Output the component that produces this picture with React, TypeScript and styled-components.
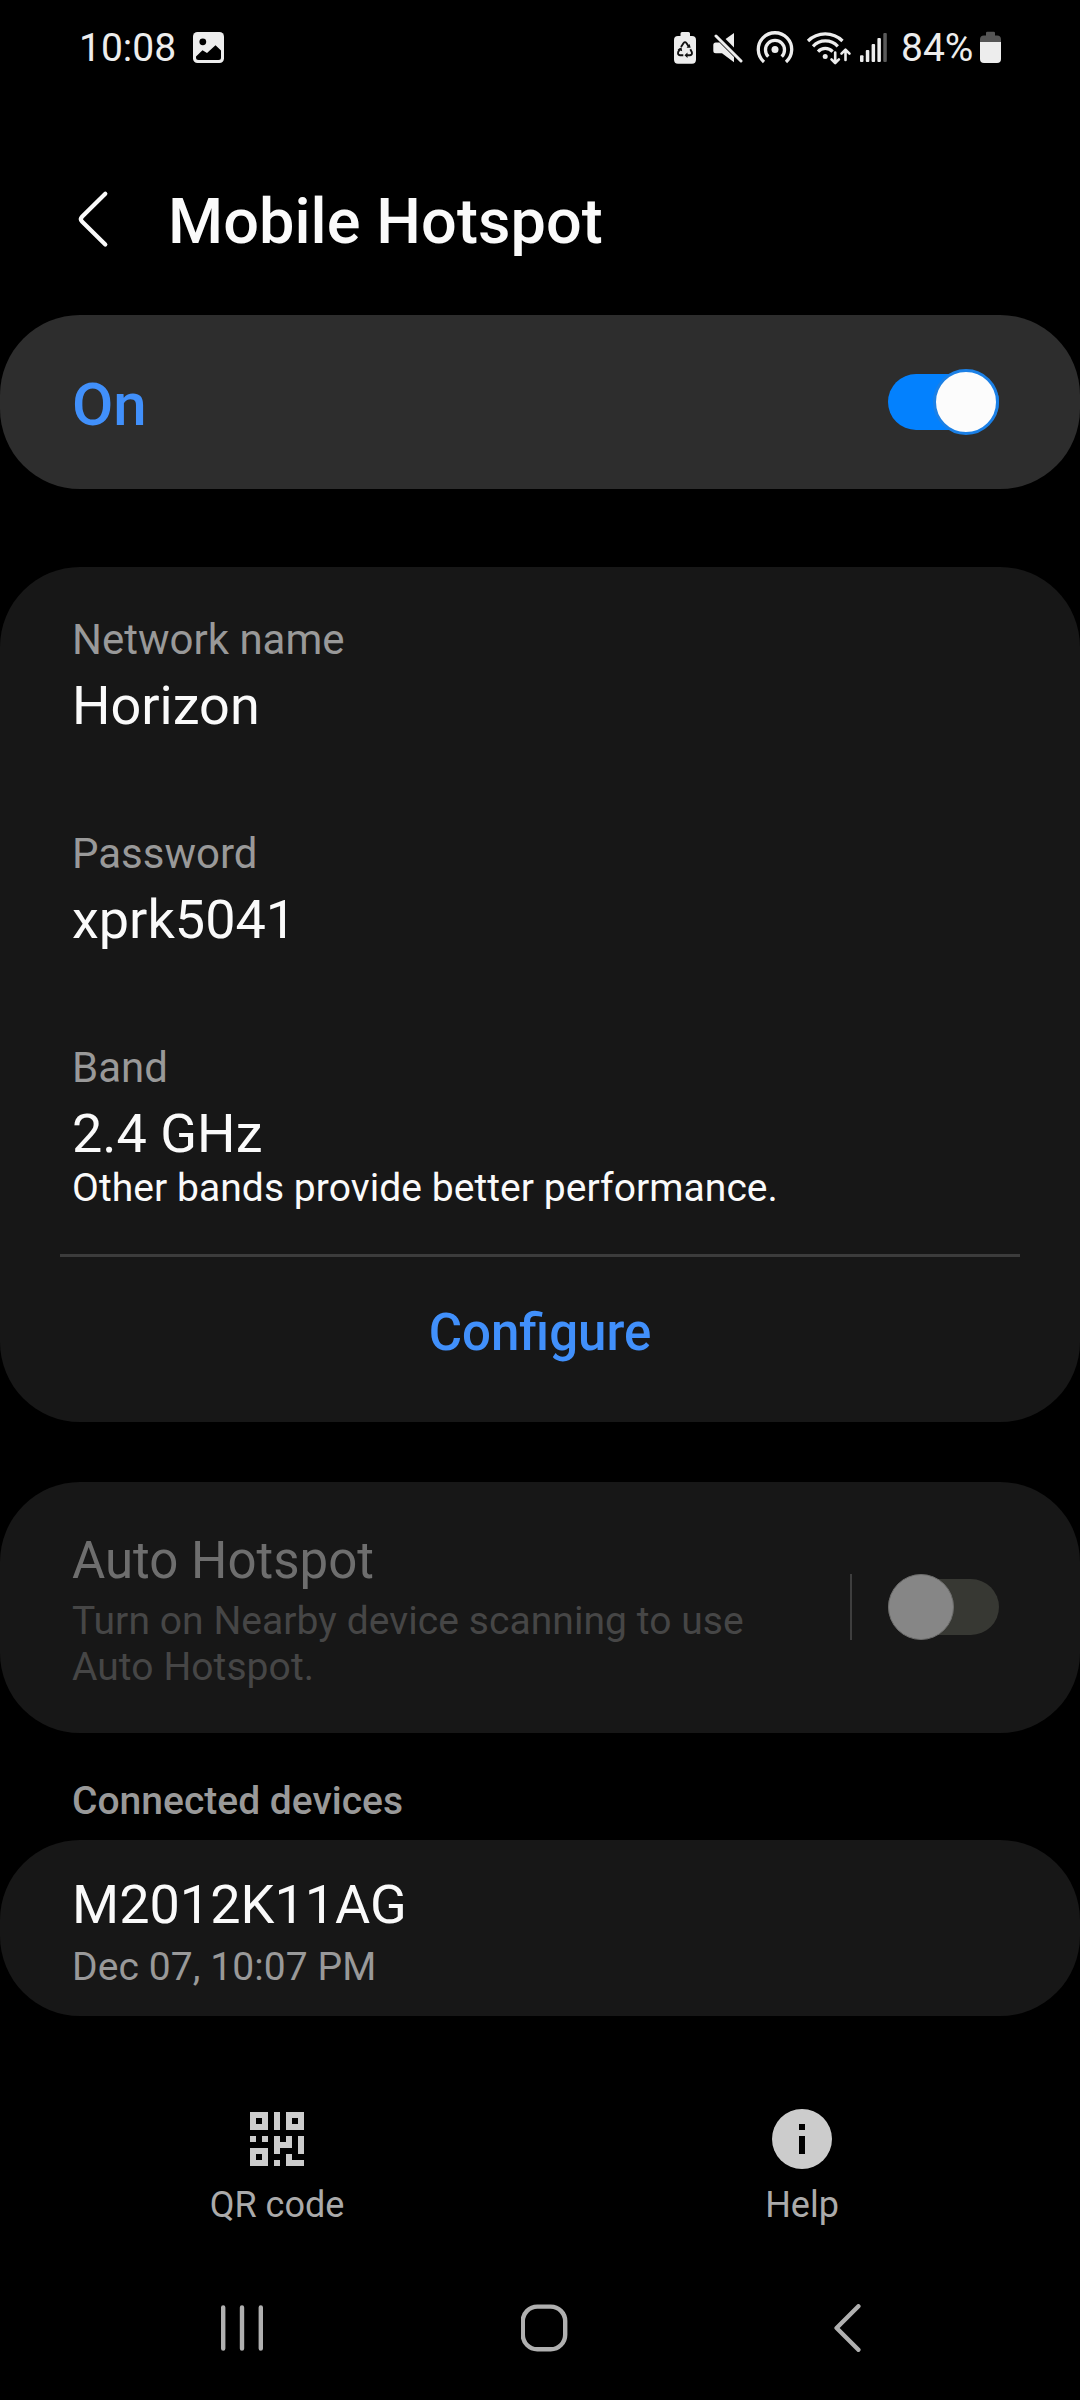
import React from "react";
import styled, { createGlobalStyle } from "styled-components";

const GlobalStyle = createGlobalStyle`
  html, body { margin: 0; padding: 0; background: #000; }
  * { box-sizing: border-box; }
`;

const Screen = styled.div`
  display: flex;
  flex-direction: column;
  width: 1080px;
  height: 2400px;
  overflow: hidden;
  background: #000;
  color: #fafafa;
  font-family: Roboto, "Liberation Sans", sans-serif;
`;

const StatusBar = styled.div`
  display: flex;
  align-items: center;
  height: 96px;
  flex: none;
  padding: 0 79px;
  font-size: 39px;
  line-height: 46px;
  color: #ededed;
`;

const Clock = styled.span`
  width: 114px;
`;

const StatusIcons = styled.div`
  display: flex;
  align-items: center;
  margin-left: auto;
`;

const StatusIcon = styled.svg<{ $before?: number }>`
  display: block;
  height: 40px;
  flex: none;
  margin-left: ${(p) => p.$before ?? 0}px;
`;

const Percent = styled.span`
  width: 79px;
  margin-left: 13px;
`;

const Header = styled.header`
  display: flex;
  align-items: center;
  height: 219px;
  flex: none;
  padding: 27px 72px 0 76px;
`;

const BackIcon = styled.svg`
  display: block;
  width: 36px;
  height: 60px;
`;

const Title = styled.h1`
  margin: 6px 0 0 56px;
  font-size: 63px;
  line-height: 74px;
  font-weight: 500;
  letter-spacing: 0.08px;
`;

const Card = styled.section<{ $top: number; $active?: boolean }>`
  flex: none;
  margin-top: ${(p) => p.$top}px;
  border-radius: 80px;
  background: ${(p) => (p.$active ? "#2d2d2d" : "#171717")};
`;

const MasterRow = styled.div`
  display: flex;
  align-items: center;
  justify-content: space-between;
  height: 174px;
  padding: 0 81px 0 72px;
`;

const MasterLabel = styled.span`
  padding-top: 5px;
  font-size: 60px;
  line-height: 70px;
  font-weight: 500;
  color: #4190fb;
`;

const Track = styled.div<{ $on?: boolean }>`
  display: flex;
  align-items: center;
  justify-content: ${(p) => (p.$on ? "flex-end" : "flex-start")};
  width: 111px;
  height: 56px;
  flex: none;
  border-radius: 28px;
  background: ${(p) => (p.$on ? "#0381fe" : "#373833")};
`;

const Knob = styled.div<{ $on?: boolean }>`
  width: 66px;
  height: 66px;
  flex: none;
  border-radius: 50%;
  border: ${(p) => (p.$on ? "3px solid #1b80e6" : "1px solid #6c6c6b")};
  background: ${(p) => (p.$on ? "#fcfcfc" : "#868686")};
`;

const Fields = styled.div`
  display: flex;
  flex-direction: column;
  gap: 87px;
  padding: 43px 72px 0;
`;

const FieldLabel = styled.div`
  font-size: 42px;
  line-height: 60px;
  color: #999;
`;

const FieldValue = styled.div`
  margin-bottom: -1px;
  padding-top: 4px;
  font-size: 54px;
  line-height: 64px;
`;

const FieldNote = styled.div`
  font-size: 39px;
  line-height: 46px;
  letter-spacing: 0.06px;
`;

const Divider = styled.div`
  height: 3px;
  margin: 43px 60px 0;
  background: #3c3c3c;
`;

const TextButton = styled.button`
  display: block;
  width: 100%;
  height: 165px;
  padding: 0 0 14px 0;
  border: 0;
  background: none;
  font: 500 51px/60px Roboto, "Liberation Sans", sans-serif;
  color: #4190fb;
`;

const AutoRow = styled.div`
  display: flex;
  align-items: center;
  height: 251px;
  padding: 0 81px 1px 72px;
`;

const AutoText = styled.div`
  flex: 1;
  padding: 7px 60px 0 0;
`;

const AutoTitle = styled.div`
  font-size: 51px;
  line-height: 60px;
  color: #6e6e6e;
`;

const AutoSummary = styled.div`
  margin-top: 7px;
  font-size: 39px;
  line-height: 46px;
  letter-spacing: 0.07px;
  color: #464646;
`;

const VerticalRule = styled.div`
  width: 2px;
  height: 66px;
  margin-right: 36px;
  background: #3e3e3e;
`;

const SectionTitle = styled.h2`
  flex: none;
  margin: 45px 72px 0;
  font-size: 39px;
  line-height: 46px;
  font-weight: 500;
  color: #999;
`;

const DeviceRow = styled.div`
  height: 176px;
  padding: 33px 72px 0;
`;

const DeviceName = styled.div`
  font-size: 54px;
  line-height: 64px;
`;

const DeviceTime = styled.div`
  margin-top: 7px;
  font-size: 39px;
  line-height: 46px;
  letter-spacing: 0.08px;
  color: #999;
`;

const Toolbar = styled.div`
  display: grid;
  grid-template-columns: 524px 524px;
  column-gap: 1px;
  margin-top: 93px;
  padding-left: 15px;
`;

const ToolItem = styled.div`
  display: flex;
  flex-direction: column;
  align-items: center;
  gap: 15px;
  font-size: 36px;
  line-height: 42px;
  color: #aaa;
`;

const ToolIcon = styled.svg`
  display: block;
  width: 60px;
  height: 60px;
`;

const NavBar = styled.nav`
  display: flex;
  justify-content: space-between;
  margin-top: 78px;
  padding: 0 208px 0 218px;
`;

const NavIcon = styled.svg`
  display: block;
  width: 48px;
  height: 48px;
  fill: none;
  stroke: #b0b0b0;
  stroke-width: 4.4;
  stroke-linecap: round;
  stroke-linejoin: round;
`;

const QR_ROWS = [
  "###.#.###",
  "#.#.#.#.#",
  "###.#.###",
  ".........",
  "#.#.#.#.#",
  "....###.#",
  "###.#...#",
  "#.#...#..",
  "###.#.###",
];

const ink = "#ededed";

function Switch({ on }: { on?: boolean }) {
  return (
    <Track $on={on}>
      <Knob $on={on} />
    </Track>
  );
}

export default function App() {
  return (
    <>
      <GlobalStyle />
      <Screen>
        <StatusBar>
          <Clock>10:08</Clock>
          <StatusIcon viewBox="193 28 31 40" width={31}>
            <rect x="193" y="32" width="31" height="31" rx="4.5" fill={ink} />
            <circle cx="202.8" cy="41.8" r="3.4" fill="#000" />
            <path d="M196 56.5 L202.5 50.2 L207 53 L215.5 45.3 L221 50.5 V57.5 Q221 60 218.5 60 H198.5 Q196 60 196 57.5Z" fill="#000" />
          </StatusIcon>
          <StatusIcons>
            <StatusIcon viewBox="674 28 22 40" width={22}>
              <path d="M680.5 36 V33.5 Q680.5 32 682 32 H688.5 Q690 32 690 33.5 V36 H692 Q696 36 696 40 V59.5 Q696 63.7 692 63.7 H678 Q674 63.7 674 59.5 V40 Q674 36 678 36Z" fill={ink} />
              <g fill="none" stroke="#111" strokeWidth="1.9">
                <path d="M681 47 L683.6 43 Q685 41.2 686.4 43 L688.8 46.6" />
                <path d="M690.3 49.2 L691.8 52 Q692.6 54.8 690 55.2 H686.5" />
                <path d="M683.3 55.2 H680 Q677.4 54.8 678.2 52 L680 49" />
              </g>
              <path d="M686.6 47.8 L690.6 47.8 L689.7 44Z M687.5 52.5 V57.9 L684.5 55.2Z M677.5 49.5 L681.5 47.3 L682.2 51.2Z" fill="#111" />
            </StatusIcon>
            <StatusIcon viewBox="713 28 30 40" width={30} $before={17}>
              <path d="M713.3 45 Q713.3 42.5 715.8 42.5 H719.5 L734 57 V62.3 L722 53.3 H715.8 Q713.3 53.3 713.3 50.8Z" fill={ink} />
              <path d="M725.6 39 L734 33 V47.6Z" fill={ink} />
              <path d="M716 36 L741 61" stroke={ink} strokeWidth="3" strokeLinecap="round" />
            </StatusIcon>
            <StatusIcon viewBox="756 28 38 40" width={38} $before={13}>
              <circle cx="775" cy="49.5" r="3.5" fill={ink} />
              <g fill="none" stroke={ink} strokeWidth="3.3">
                <path d="M768.3 56.6 A9.5 9.5 0 1 1 781.7 56.6" />
                <path d="M764 62 A16.7 16.7 0 1 1 786 62" />
              </g>
            </StatusIcon>
            <StatusIcon viewBox="806 28 46 40" width={46} $before={12}>
              <g fill="none" stroke={ink} strokeWidth="3.2">
                <path d="M808 41 A24.5 24.5 0 0 1 842.5 41" />
                <path d="M813 46.3 A17 17 0 0 1 837.8 46.3" />
                <path d="M818 51.6 A10 10 0 0 1 832.6 51.6" />
              </g>
              <circle cx="825.2" cy="56.5" r="2.5" fill={ink} />
              <g fill="none" stroke={ink} strokeWidth="2.6" strokeLinecap="round" strokeLinejoin="round">
                <path d="M835.2 52.5 V62.5 M831.5 59.3 L835.2 63 L838.9 59.3" />
                <path d="M845.5 60 V50.5 M841.5 53.7 L845.5 49.7 L849.5 53.7" />
              </g>
            </StatusIcon>
            <StatusIcon viewBox="860 28 28 40" width={28} $before={8}>
              <g fill={ink}>
                <rect x="860" y="55.3" width="3.5" height="6.7" rx="1" />
                <rect x="865.8" y="50" width="3.5" height="12" rx="1" />
                <rect x="871.6" y="44" width="3.5" height="18" rx="1" />
                <rect x="877.4" y="38" width="3.5" height="24" rx="1" />
              </g>
              <rect x="883.3" y="33" width="3.5" height="29" rx="1" fill="#5a5a5a" />
            </StatusIcon>
            <Percent>84%</Percent>
            <StatusIcon viewBox="980 28 21 40" width={21}>
              <path d="M986 35.5 V33 Q986 31.7 987.3 31.7 H993.7 Q995 31.7 995 33 V35.5 H997 Q1001 35.5 1001 39.5 V42 H980 V39.5 Q980 35.5 984 35.5Z" fill="#555" />
              <path d="M980 42 H1001 V59 Q1001 63 997 63 H984 Q980 63 980 59Z" fill={ink} />
            </StatusIcon>
          </StatusIcons>
        </StatusBar>

        <Header>
          <BackIcon viewBox="76 189 36 60">
            <path d="M105.3 193.8 L82 216.8 Q79.7 219.2 82 221.6 L105.3 244.6" fill="none" stroke="#fafafa" strokeWidth="4.2" strokeLinecap="round" />
          </BackIcon>
          <Title>Mobile Hotspot</Title>
        </Header>

        <Card $top={0} $active>
          <MasterRow>
            <MasterLabel>On</MasterLabel>
            <Switch on />
          </MasterRow>
        </Card>

        <Card $top={78}>
          <Fields>
            <div>
              <FieldLabel>Network name</FieldLabel>
              <FieldValue>Horizon</FieldValue>
            </div>
            <div>
              <FieldLabel>Password</FieldLabel>
              <FieldValue>xprk5041</FieldValue>
            </div>
            <div>
              <FieldLabel>Band</FieldLabel>
              <FieldValue>2.4 GHz</FieldValue>
              <FieldNote>Other bands provide better performance.</FieldNote>
            </div>
          </Fields>
          <Divider />
          <TextButton>Configure</TextButton>
        </Card>

        <Card $top={60}>
          <AutoRow>
            <AutoText>
              <AutoTitle>Auto Hotspot</AutoTitle>
              <AutoSummary>Turn on Nearby device scanning to use Auto Hotspot.</AutoSummary>
            </AutoText>
            <VerticalRule />
            <Switch />
          </AutoRow>
        </Card>

        <SectionTitle>Connected devices</SectionTitle>
        <Card $top={16}>
          <DeviceRow>
            <DeviceName>M2012K11AG</DeviceName>
            <DeviceTime>Dec 07, 10:07 PM</DeviceTime>
          </DeviceRow>
        </Card>

        <Toolbar>
          <ToolItem>
            <ToolIcon viewBox="0 0 60 60" fill="#ccc" shapeRendering="crispEdges">
              {QR_ROWS.flatMap((row, y) =>
                [...row].map((cell, x) =>
                  cell === "#" ? <rect key={`${x}-${y}`} x={3 + x * 6} y={3 + y * 6} width="6" height="6" /> : null
                )
              )}
            </ToolIcon>
            <span>QR code</span>
          </ToolItem>
          <ToolItem>
            <ToolIcon viewBox="0 0 60 60">
              <circle cx="30" cy="30" r="30" fill="#ccc" />
              <path d="M27 15h6v6h-6z M27 27h6v18h-6z" fill="#000" />
            </ToolIcon>
            <span>Help</span>
          </ToolItem>
        </Toolbar>

        <NavBar>
          <NavIcon viewBox="218 2304 48 48">
            <path d="M223.2 2307.5 V2348.5 M242 2307.5 V2348.5 M260.8 2307.5 V2348.5" />
          </NavIcon>
          <NavIcon viewBox="521 2304 48 48">
            <rect x="522.8" y="2306.6" width="42.4" height="42.6" rx="14.5" />
          </NavIcon>
          <NavIcon viewBox="824 2304 48 48">
            <path d="M858.4 2306.3 L836.6 2328 L858.4 2349.8" />
          </NavIcon>
        </NavBar>
      </Screen>
    </>
  );
}
